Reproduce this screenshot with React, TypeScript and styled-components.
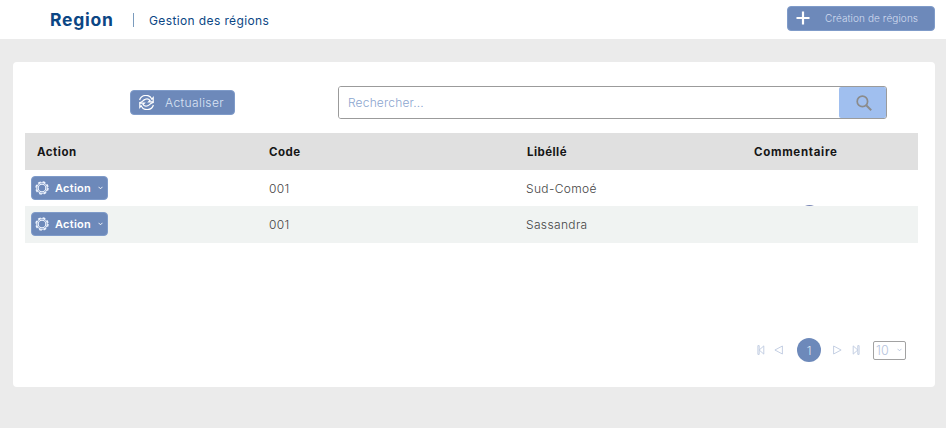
import React from "react";
import styled, { createGlobalStyle } from "styled-components";

const GlobalStyle = createGlobalStyle`
  *, *::before, *::after { box-sizing: border-box; }
  body { margin: 0; background: #ebebeb; font-family: Inter, "Open Sans", sans-serif; }
  button, input { font-family: inherit; }
`;

const Page = styled.div`
  height: 428px;
  overflow: hidden;
  background: #ebebeb;
`;

const Header = styled.header`
  display: flex;
  align-items: center;
  height: 39px;
  padding: 0 11px 0 50px;
  background: #fff;
  color: #0b4684;
`;

const Title = styled.h1`
  width: 83px;
  margin: 0;
  font-size: 17.5px;
  line-height: 20px;
  font-weight: 700;
  letter-spacing: 0.75px;
  white-space: nowrap;
`;

const Separator = styled.span`
  width: 1px;
  height: 14px;
  margin: 1px 15px 0 0;
  background: #7b9bbd;
`;

const Subtitle = styled.span`
  margin-top: 2px;
  font-size: 12px;
  line-height: 16px;
  font-weight: 400;
  letter-spacing: 0.38px;
  white-space: nowrap;
`;

const Button = styled.button`
  display: flex;
  align-items: center;
  flex: none;
  padding: 0;
  border: 1px solid #7f9bc9;
  border-radius: 4px;
  background: #6d89ba;
  color: #fff;
  white-space: nowrap;
`;

const CreateButton = styled(Button)`
  width: 148px;
  height: 25px;
  margin: -3px 0 0 auto;
  padding-left: 8px;
  gap: 15px;
  color: #d3ddf0;
  font-size: 10px;
  font-weight: 300;
  letter-spacing: 0.1px;
`;

const RefreshButton = styled(Button)`
  width: 105px;
  height: 25px;
  margin-left: 117px;
  padding-left: 7px;
  gap: 10px;
  color: #dbe4f5;
  font-size: 12px;
  font-weight: 300;
  letter-spacing: 0.4px;
`;

const ActionButton = styled(Button)`
  width: 77px;
  height: 24px;
  padding-left: 3px;
  font-size: 11px;
  font-weight: 600;
  letter-spacing: 0.25px;
`;

const ActionLabel = styled.span`
  width: 43px;
  margin-left: 6px;
  text-align: left;
`;

const Card = styled.main`
  display: flex;
  flex-direction: column;
  width: 922px;
  height: 325px;
  margin: 23px 0 0 13px;
  border-radius: 4px;
  background: #fff;
`;

const Toolbar = styled.div`
  display: flex;
  align-items: center;
  height: 71px;
  padding-top: 10px;
`;

const SearchBox = styled.div`
  display: flex;
  width: 549px;
  height: 33px;
  margin-left: 103px;
  border: 1px solid #9b9b9b;
  border-radius: 3px;
  overflow: hidden;
`;

const SearchInput = styled.input`
  flex: 1;
  min-width: 0;
  padding: 0 0 0 9px;
  border: 0;
  outline: 0;
  background: #fff;
  font-size: 12px;
  font-weight: 300;
  letter-spacing: 0.17px;
  &::placeholder { color: #8ba5cf; opacity: 1; }
`;

const SearchButton = styled.button`
  display: flex;
  align-items: center;
  justify-content: center;
  width: 47px;
  padding: 0 0 0 2px;
  border: 0;
  border-radius: 2px 0 0 2px;
  background: #a0bfef;
  color: #8b8b8b;
`;

const Table = styled.div`
  width: 893px;
  margin-left: 12px;
`;

const Row = styled.div<{ $striped?: boolean }>`
  display: grid;
  grid-template-columns: 244px 257px 228px 1fr;
  align-items: center;
  height: ${(p) => (p.$striped ? 37 : 36)}px;
  background: ${(p) => (p.$striped ? "#f0f3f2" : "#fff")};
`;

const HeadRow = styled(Row)`
  height: 37px;
  background: #e0e0e0;
`;

const HeadCell = styled.div<{ $indent?: number; $tracking: number }>`
  padding-left: ${(p) => p.$indent ?? 0}px;
  color: #161616;
  font-size: 11.5px;
  font-weight: 700;
  letter-spacing: ${(p) => p.$tracking}px;
`;

const Cell = styled.div`
  color: #444;
  font-size: 12px;
  font-weight: 300;
  letter-spacing: 0.35px;
`;

const ActionCell = styled.div<{ $raised?: boolean }>`
  padding-left: 6px;
  margin-top: ${(p) => (p.$raised ? -1 : 0)}px;
`;

const NoteCell = styled.div`
  align-self: end;
  padding-left: 51px;
  svg { display: block; }
`;

const Pagination = styled.nav`
  display: flex;
  align-items: center;
  height: 26px;
  margin: 94px 0 0 744px;
  color: #bdcae0;
`;

const PageLink = styled.button<{ $gap: number }>`
  display: flex;
  flex: none;
  margin: 0 ${(p) => p.$gap}px 0 0;
  padding: 0;
  border: 0;
  background: none;
  color: inherit;
`;

const CurrentPage = styled.span`
  display: flex;
  align-items: center;
  justify-content: center;
  width: 24px;
  height: 24px;
  margin-right: 12px;
  border-radius: 50%;
  background: #6d89ba;
  color: #dce5f4;
  font-size: 12px;
  font-weight: 300;
`;

const PageSize = styled.div`
  display: flex;
  align-items: center;
  justify-content: space-between;
  width: 33px;
  height: 19px;
  padding: 0 3px 0 2px;
  border: 1px solid #a2a2a2;
  border-radius: 2px;
  color: #b5c3dc;
  font-size: 12.5px;
  font-weight: 300;
`;

const PlusIcon = () => (
  <svg width="14" height="14" viewBox="0 0 14 14" fill="none" stroke="#fff" strokeWidth="2.2">
    <path d="M7 0.5v13M0.5 7h13" />
  </svg>
);

const RefreshIcon = () => (
  <svg width="17" height="15" viewBox="0 0 17 15" fill="none" stroke="#fff" strokeWidth="1.2">
    <path d="M1.6 5A6.6 6.6 0 0 1 13.9 4.2L15.2 2.6V6.9H10.6L12 5.4A4.2 4.2 0 0 0 7.2 4.3C4.8 5 4.6 7.5 1.3 7.7" />
    <path d="M15.4 10A6.6 6.6 0 0 1 3.1 10.8L1.8 12.4V8.1H6.4L5 9.6A4.2 4.2 0 0 0 9.8 10.7C12.2 10 12.4 7.5 15.7 7.3" />
  </svg>
);

const GearIcon = () => (
  <svg width="14" height="14" viewBox="0 0 14 14" fill="none" stroke="#eef4ff">
    <circle cx="7" cy="7" r="6" strokeWidth="1.4" strokeDasharray="2.7 2.01" />
    <circle cx="7" cy="7" r="5.3" strokeWidth="1" />
    <circle cx="7" cy="7" r="3.8" strokeWidth="1.1" />
  </svg>
);

const ChevronIcon = () => (
  <svg width="5" height="4" viewBox="0 0 5 4" fill="none" stroke="currentColor" strokeWidth="0.9">
    <path d="M0.5 0.8l2 2 2-2" />
  </svg>
);

const SearchIcon = () => (
  <svg width="16" height="16" viewBox="0 0 16 16" fill="none" stroke="currentColor" strokeWidth="1.7">
    <circle cx="6.4" cy="6.4" r="5.2" />
    <path d="M10.2 10.2l5 5" strokeWidth="2" />
  </svg>
);

const ArrowIcon = ({ forward = false, end = false }: { forward?: boolean; end?: boolean }) => (
  <svg width={end ? 8 : 9} height="10" viewBox={end ? "0 0 8 10" : "0 0 9 10"} fill="none" stroke="currentColor" strokeWidth="0.9">
    <g transform={forward ? `translate(${end ? 8 : 9} 0) scale(-1 1)` : undefined}>
      {end ? <path d="M6.8 0.9v8.2L2.2 5zM0.9 0.6v8.8h1.3v-8.8z" /> : <path d="M8.4 1v8L0.9 5z" />}
    </g>
  </svg>
);

const regions = [
  { code: "001", label: "Sud-Comoé", note: true },
  { code: "001", label: "Sassandra", note: false },
];

export default function App() {
  return (
    <Page>
      <GlobalStyle />
      <Header>
        <Title>Region</Title>
        <Separator />
        <Subtitle>Gestion des régions</Subtitle>
        <CreateButton><PlusIcon />Création de régions</CreateButton>
      </Header>
      <Card>
        <Toolbar>
          <RefreshButton><RefreshIcon />Actualiser</RefreshButton>
          <SearchBox>
            <SearchInput placeholder="Rechercher..." />
            <SearchButton aria-label="Rechercher"><SearchIcon /></SearchButton>
          </SearchBox>
        </Toolbar>
        <Table>
          <HeadRow>
            <HeadCell $indent={12} $tracking={0.5}>Action</HeadCell>
            <HeadCell $tracking={0.45}>Code</HeadCell>
            <HeadCell $indent={1} $tracking={0.45}>Libéllé</HeadCell>
            <HeadCell $tracking={0.7}>Commentaire</HeadCell>
          </HeadRow>
          {regions.map((region, i) => (
            <Row key={region.label} $striped={i % 2 === 1}>
              <ActionCell $raised={i % 2 === 1}>
                <ActionButton><GearIcon /><ActionLabel>Action</ActionLabel><ChevronIcon /></ActionButton>
              </ActionCell>
              <Cell>{region.code}</Cell>
              <Cell>{region.label}</Cell>
              <NoteCell>
                {region.note && (
                  <svg width="9" height="1" viewBox="0 0 9 1"><path d="M0 1Q4.5-0.8 9 1z" fill="#7884b4" /></svg>
                )}
              </NoteCell>
            </Row>
          ))}
        </Table>
        <Pagination>
          <PageLink $gap={9} aria-label="Première page"><ArrowIcon end /></PageLink>
          <PageLink $gap={14} aria-label="Page précédente"><ArrowIcon /></PageLink>
          <CurrentPage>1</CurrentPage>
          <PageLink $gap={10} aria-label="Page suivante"><ArrowIcon forward /></PageLink>
          <PageLink $gap={13} aria-label="Dernière page"><ArrowIcon end forward /></PageLink>
          <PageSize>10<ChevronIcon /></PageSize>
        </Pagination>
      </Card>
    </Page>
  );
}
